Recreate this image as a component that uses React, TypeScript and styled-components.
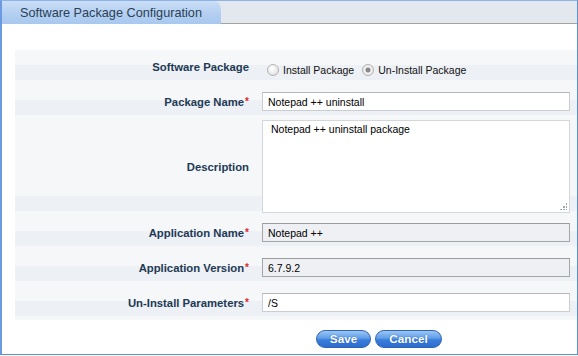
import styled, { createGlobalStyle } from 'styled-components';

const GlobalStyle = createGlobalStyle`
  html, body {
    margin: 0;
    padding: 0;
    background: #ffffff;
  }

  body {
    font-family: 'Liberation Sans', Arial, sans-serif;
  }
`;

const Frame = styled.div`
  box-sizing: border-box;
  width: 578px;
  height: 355px;
  border-top: 1px solid #8fb3e6;
  border-left: 2px solid #6a9ae0;
  border-right: 1px solid #5b8fd8;
  border-bottom: 1px solid #5b8fd8;
  background: #ffffff;
  display: flex;
  flex-direction: column;
`;

const Header = styled.div`
  height: 22px;
  background: #e3e8ee;
  border-bottom: 1px solid #a3a69c;
  display: flex;
  align-items: flex-start;
`;

const Tab = styled.div`
  box-sizing: border-box;
  width: 219px;
  height: 23px;
  margin-bottom: -1px;
  padding-left: 18px;
  display: flex;
  align-items: center;
  border-top-right-radius: 8px;
  background: linear-gradient(to bottom, #cadef6 0%, #b4cff1 55%, #a8c8ef 100%);
  color: #2a4156;
  font-size: 12.7px;
  white-space: nowrap;
`;

const Body = styled.div`
  padding: 26px 0 0 13px;
  display: flex;
  flex-direction: column;
`;

const Table = styled.div`
  background: #f5f7f9;
  padding-bottom: 4px;
  display: flex;
  flex-direction: column;
`;

const Row = styled.div`
  display: grid;
  grid-template-columns: 247px 1fr;
  align-items: center;
  background: linear-gradient(
    to bottom,
    #f5f7f9 0,
    #f5f7f9 calc(100% - 15px),
    #edf0f4 calc(100% - 15px),
    #edf0f4 100%
  );
`;

const Label = styled.div<{ $top?: number }>`
  align-self: stretch;
  box-sizing: border-box;
  display: flex;
  align-items: center;
  justify-content: flex-end;
  padding: ${p => p.$top ?? 12}px 13px 4px 0;
  color: #1e3a55;
  font-size: 11.3px;
  font-weight: bold;
  white-space: nowrap;
`;

const Required = styled.span`
  color: #e0242a;
  font-size: 10px;
  font-weight: bold;
  margin-left: 1px;
`;

const Value = styled.div<{ $top?: number; $bottom?: number }>`
  position: relative;
  padding: ${p => p.$top ?? 12}px 7px ${p => p.$bottom ?? 4}px 0;
  display: flex;
  align-items: center;
`;

const TextInput = styled.input<{ $readOnly?: boolean }>`
  box-sizing: border-box;
  width: 100%;
  height: 19px;
  margin: 0;
  padding: 0 5px;
  font-family: 'Liberation Sans', Arial, sans-serif;
  font-size: 10.5px;
  color: #000000;
  outline: none;
  border: 1px solid ${p => (p.$readOnly ? '#a4a6a8' : '#c9cdd1')};
  border-top-color: ${p => (p.$readOnly ? '#9a9c9e' : '#b4b8bc')};
  background: ${p => (p.$readOnly ? '#eef0f3' : '#ffffff')};
`;

const TextArea = styled.textarea`
  box-sizing: border-box;
  width: 100%;
  height: 93px;
  margin: 0 0 -2px 0;
  padding: 2px 8px;
  font-family: 'Liberation Sans', Arial, sans-serif;
  font-size: 10.5px;
  color: #000000;
  border: 1px solid #d2d7dc;
  background: #ffffff;
  outline: none;
  resize: none;
`;

/* dotted resize grip in the textarea's lower right corner */
const Grip = styled.span`
  position: absolute;
  right: 10px;
  bottom: 1px;
  width: 7px;
  height: 7px;
  background:
    radial-gradient(circle, #9aa0a6 0.7px, transparent 0.8px) 6px 0 / 2px 2px no-repeat,
    radial-gradient(circle, #9aa0a6 0.7px, transparent 0.8px) 3px 3px / 2px 2px no-repeat,
    radial-gradient(circle, #9aa0a6 0.7px, transparent 0.8px) 6px 3px / 2px 2px no-repeat,
    radial-gradient(circle, #9aa0a6 0.7px, transparent 0.8px) 0 6px / 2px 2px no-repeat,
    radial-gradient(circle, #9aa0a6 0.7px, transparent 0.8px) 3px 6px / 2px 2px no-repeat,
    radial-gradient(circle, #9aa0a6 0.7px, transparent 0.8px) 6px 6px / 2px 2px no-repeat;
  pointer-events: none;
`;

const RadioGroup = styled.div`
  display: flex;
  align-items: center;
  gap: 8px;
  padding-left: 5px;
`;

const RadioOption = styled.label`
  display: flex;
  align-items: center;
  gap: 4px;
  font-size: 10.5px;
  color: #111111;
  white-space: nowrap;
`;

const Radio = styled.input.attrs({ type: 'radio' })`
  appearance: none;
  -webkit-appearance: none;
  box-sizing: border-box;
  width: 12px;
  height: 12px;
  margin: 0;
  border-radius: 50%;
  border: 1px solid #b3b3b3;
  background: radial-gradient(circle at 40% 35%, #ffffff 0, #f2f2f2 40%, #d6d6d6 100%);

  &:checked {
    background: radial-gradient(
      circle,
      #7e7e7e 0,
      #909090 2.2px,
      #e6e6e6 2.8px,
      #f4f4f4 3.6px,
      #cfcfcf 100%
    );
  }
`;

const ButtonBar = styled.div`
  display: flex;
  gap: 4px;
  padding: 10px 0 0 301px;
`;

const Button = styled.button<{ $width: number }>`
  box-sizing: border-box;
  width: ${p => p.$width}px;
  height: 18px;
  padding: 0;
  border-radius: 9px;
  border: 1px solid #2f64b4;
  background: linear-gradient(to bottom, #9cc6f4 0%, #5e9de8 45%, #3a7ddc 55%, #2c6bd0 100%);
  color: #ffffff;
  font-family: 'Liberation Sans', Arial, sans-serif;
  font-size: 11.7px;
  font-weight: bold;
  line-height: 16px;
  text-shadow: 0 0 1px #1d4f9c;
  cursor: pointer;
`;

export default function App() {
  return (
    <>
      <GlobalStyle />
      <Frame>
        <Header>
          <Tab>Software Package Configuration</Tab>
        </Header>
        <Body>
          <Table>
            <Row>
              <Label $top={7}>Software Package</Label>
              <Value $top={14}>
                <RadioGroup>
                  <RadioOption>
                    <Radio name="mode" value="install" />
                    Install Package
                  </RadioOption>
                  <RadioOption>
                    <Radio name="mode" value="uninstall" defaultChecked />
                    Un-Install Package
                  </RadioOption>
                </RadioGroup>
              </Value>
            </Row>
            <Row>
              <Label>
                Package Name<Required>*</Required>
              </Label>
              <Value>
                <TextInput defaultValue="Notepad ++ uninstall" />
              </Value>
            </Row>
            <Row>
              <Label>Description</Label>
              <Value $top={5} $bottom={0}>
                <TextArea defaultValue="Notepad ++ uninstall package" />
                <Grip />
              </Value>
            </Row>
            <Row>
              <Label>
                Application Name<Required>*</Required>
              </Label>
              <Value>
                <TextInput $readOnly readOnly defaultValue="Notepad ++" />
              </Value>
            </Row>
            <Row>
              <Label>
                Application Version<Required>*</Required>
              </Label>
              <Value>
                <TextInput $readOnly readOnly defaultValue="6.7.9.2" />
              </Value>
            </Row>
            <Row>
              <Label>
                Un-Install Parameters<Required>*</Required>
              </Label>
              <Value>
                <TextInput defaultValue="/S" />
              </Value>
            </Row>
          </Table>
          <ButtonBar>
            <Button $width={55}>Save</Button>
            <Button $width={67}>Cancel</Button>
          </ButtonBar>
        </Body>
      </Frame>
    </>
  );
}
